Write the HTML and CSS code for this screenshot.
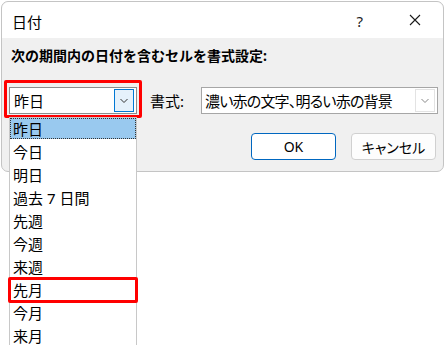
FILE: index.html
```html
<!DOCTYPE html>
<html lang="ja">
<head>
<meta charset="UTF-8">
<title>日付</title>
<link rel="stylesheet" href="styles.css">
</head>
<body>
<div class="page">
  <div class="dialog">
    <div class="titlebar">
      <span class="title">日付</span>
      <span class="help">?</span>
      <span class="close">
        <svg width="12" height="12" viewBox="0 0 12 12"><path d="M1 1 L11 11 M11 1 L1 11" stroke="#1a1a1a" stroke-width="1.1" fill="none"/></svg>
      </span>
    </div>
    <div class="content">
      <div class="label">次の期間内の日付を含むセルを書式設定:</div>
      <div class="row">
        <div class="combo period">
          <span class="value">昨日</span>
          <span class="drop focus">
            <svg width="10" height="6" viewBox="0 0 10 6"><path d="M1.5 1 L5 4.5 L8.5 1" stroke="#333" stroke-width="1" fill="none"/></svg>
          </span>
          <div class="mark mark-combo"></div>
          <ul class="droplist">
            <li class="selected">昨日</li>
            <li>今日</li>
            <li>明日</li>
            <li>過去 7 日間</li>
            <li>先週</li>
            <li>今週</li>
            <li>来週</li>
            <li class="marked">先月</li>
            <li>今月</li>
            <li>来月</li>
          </ul>
        </div>
        <span class="fmt-label">書式:</span>
        <div class="combo format">
          <span class="value">濃い赤の文字、明るい赤の背景</span>
          <span class="drop">
            <svg width="10" height="6" viewBox="0 0 10 6"><path d="M1.5 1 L5 4.5 L8.5 1" stroke="#888" stroke-width="1" fill="none"/></svg>
          </span>
        </div>
      </div>
      <div class="buttons">
        <button class="btn ok">OK</button>
        <button class="btn">キャンセル</button>
      </div>
    </div>
  </div>
</div>
</body>
</html>
```

FILE: styles.css
```css
html, body {
  margin: 0;
  height: 100%;
  background: #ffffff;
}
body {
  font-family: "Noto Sans", "Noto Sans CJK JP", sans-serif;
  color: #000;
}
.page {
  height: 345px;
  padding-top: 1px;
  box-sizing: border-box;
}

.dialog {
  margin: 0 2px 0 1px;
  height: 171px;
  border: 1px solid #c4c4c4;
  border-radius: 7px;
  background: #f0f0f0;
  box-sizing: border-box;
  display: flex;
  flex-direction: column;
}

.titlebar {
  height: 36px;
  background: #fff;
  border-radius: 7px 7px 0 0;
  display: flex;
  align-items: center;
  padding-left: 10px;
}
.title {
  font-size: 15px;
  flex: 1;
  margin-top: 2px;
}
.help {
  font-size: 15px;
  margin-right: 46px;
  margin-top: 1px;
  color: #222;
}
.close {
  display: flex;
  margin-right: 22px;
}

.content {
  flex: 1;
  padding: 9px 5px 0 7px;
  display: flex;
  flex-direction: column;
}
.label {
  font-size: 14px;
  font-weight: bold;
  line-height: 18px;
  padding-left: 2px;
}

.row {
  display: flex;
  align-items: center;
  margin-top: 22px;
}
.combo {
  height: 27px;
  box-sizing: border-box;
  background: #fff;
  border: 1px solid #a6a6a6;
  display: flex;
  align-items: center;
  position: relative;
  font-size: 15px;
}
.combo .value {
  flex: 1;
  padding-left: 4px;
  white-space: nowrap;
}
.period {
  width: 128px;
  border-color: #8c8c8c;
}
.format {
  width: 237px;
  margin-left: auto;
}
.format .value {
  font-feature-settings: "palt";
  letter-spacing: -0.8px;
  padding-left: 3px;
}
.fmt-label {
  font-size: 15px;
  margin-left: 13px;
}

.drop {
  width: 20px;
  height: 23px;
  box-sizing: border-box;
  margin-right: 2px;
  border: 1px solid #e3e3e3;
  display: flex;
  align-items: center;
  justify-content: center;
}
.drop.focus {
  border-color: #0078d4;
  background: #e5f1fb;
}

.mark {
  position: absolute;
  border: 3px solid #ff0000;
  border-radius: 2px;
  pointer-events: none;
}
.mark-combo {
  top: -8px;
  left: -6px;
  right: -6px;
  bottom: -5px;
}

.droplist {
  position: absolute;
  top: 29px;
  left: -1px;
  width: 128px;
  height: 240px;
  margin: 0;
  padding: 0;
  list-style: none;
  background: #fff;
  border: 1px solid #c8c8c8;
  box-sizing: border-box;
  z-index: 2;
}
.droplist li {
  height: 23px;
  line-height: 22px;
  padding-left: 3px;
  font-size: 15px;
  box-sizing: border-box;
  position: relative;
}
.droplist li.selected {
  background: #99c9ef;
  border: 1px dotted #333;
  line-height: 20px;
  padding-left: 2px;
  height: 21px;
  margin-bottom: 2px;
}
.droplist li.marked::after {
  content: "";
  position: absolute;
  top: -2px;
  left: -2px;
  right: -2px;
  bottom: -1px;
  border: 3px solid #ff0000;
  border-radius: 2px;
}

.buttons {
  display: flex;
  justify-content: flex-end;
  gap: 15px;
  margin-top: 19px;
  padding-right: 2px;
}
.btn {
  width: 85px;
  height: 27px;
  font-family: "Noto Sans", "Noto Sans CJK JP", sans-serif;
  font-size: 14px;
  font-feature-settings: "palt";
  background: #fdfdfd;
  border: 1px solid #d0d0d0;
  border-radius: 4px;
  color: #000;
  padding: 0;
}
.btn.ok {
  background: #fff;
  border-color: #0067c0;
}
```
